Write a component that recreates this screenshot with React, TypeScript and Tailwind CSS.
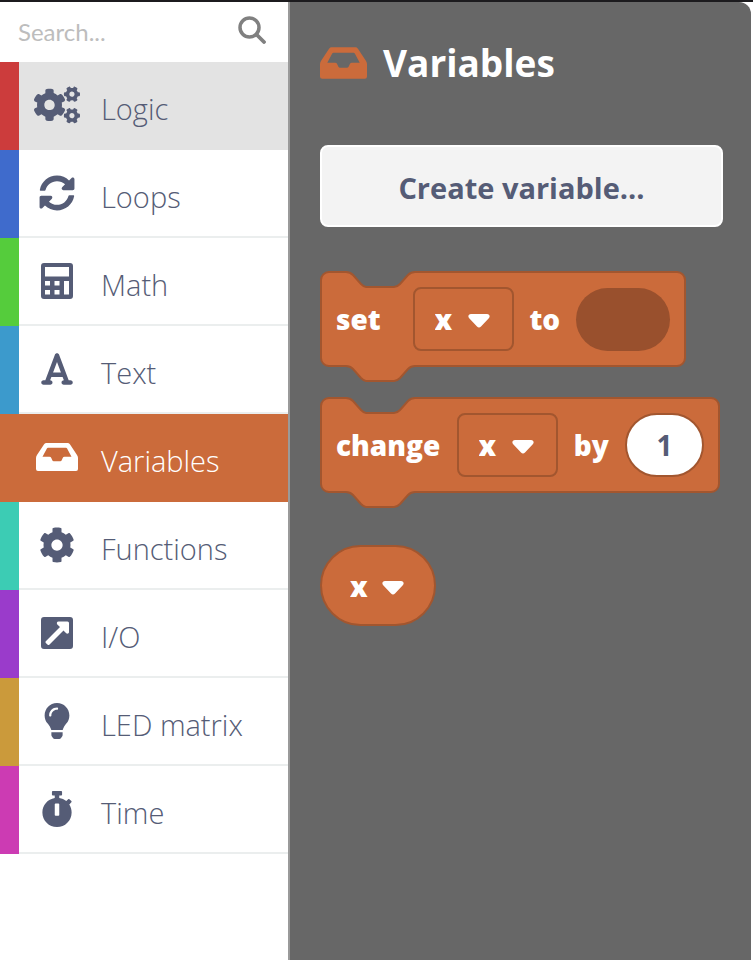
import React from "react";
import { FaCog, FaCogs, FaLightbulb, FaStopwatch, FaSyncAlt } from "react-icons/fa";
import { FaFont } from "react-icons/fa6";

function Calculator() {
  return (
    <svg viewBox="0 0 32 36" className="h-9 w-8" aria-hidden="true">
      <path
        fill="currentColor"
        fillRule="evenodd"
        d="M3 0H29a3 3 0 0 1 3 3V33a3 3 0 0 1-3 3H3a3 3 0 0 1-3-3V3a3 3 0 0 1 3-3ZM4 4V13.500H28V4ZM4 18V22.500H9V18ZM13.500 18V22.500H18.500V18ZM23 18V31.500H28V18ZM4 27V31.500H9V27ZM13.500 27V31.500H18.500V27Z"
      />
    </svg>
  );
}

function Inbox({ className }: { className: string }) {
  return (
    <svg viewBox="0 0 42 28" className={className} aria-hidden="true">
      <path
        fill="currentColor"
        fillRule="evenodd"
        d="M10.500 0H31.500Q33 0 33.900 1.300L41 12Q42 13.500 42 15V26Q42 28 40 28H2Q0 28 0 26V15Q0 13.500 1 12L8.100 1.300Q9 0 10.500 0ZM12 4.800Q11.300 4.800 10.900 5.400L6.500 13.800H13.500Q14.800 13.800 15.300 15L16.300 17.200Q16.700 18.200 17.700 18.200H24.300Q25.300 18.200 25.700 17.200L26.700 15Q27.200 13.800 28.500 13.800H35.500L31.100 5.400Q30.700 4.800 30 4.800Z"
      />
    </svg>
  );
}

function DiagonalArrow() {
  return (
    <svg viewBox="0 0 32 32" className="size-8" aria-hidden="true">
      <path
        fill="currentColor"
        fillRule="evenodd"
        d="M3 0H29a3 3 0 0 1 3 3V29a3 3 0 0 1-3 3H3a3 3 0 0 1-3-3V3a3 3 0 0 1 3-3ZM17.500 4.500C16 4.500 15.300 6.300 16.300 7.400L19 10.100L4.800 24.200Q4 25 4.800 25.900L6.700 27.700Q7.500 28.500 8.300 27.700L22.500 13.600L25.200 16.200C26.300 17.200 28 16.500 28 15V6Q28 4.500 26.500 4.500Z"
      />
    </svg>
  );
}

function Magnifier() {
  return (
    <svg viewBox="0 0 28 28" className="size-7" fill="none" stroke="currentColor" aria-hidden="true">
      <circle cx="11.500" cy="11.500" r="9.500" strokeWidth="3.5" />
      <path d="M18.500 18.500L26 26" strokeWidth="3.8" strokeLinecap="round" />
    </svg>
  );
}

const categories = [
  { name: "Logic", bar: "bg-[#cc3c3c]", icon: <FaCogs size={46} /> },
  { name: "Loops", bar: "bg-[#3f6bcc]", icon: <FaSyncAlt size={36} /> },
  { name: "Math", bar: "bg-[#55cc3c]", icon: <Calculator /> },
  { name: "Text", bar: "bg-[#3c9acc]", icon: <FaFont size={36} /> },
  { name: "Variables", bar: "bg-[#cb6b3b]", icon: <Inbox className="h-7 w-[42px]" /> },
  { name: "Functions", bar: "bg-[#3cccb4]", icon: <FaCog size={36} /> },
  { name: "I/O", bar: "bg-[#9a3bcb]", icon: <DiagonalArrow /> },
  { name: "LED matrix", bar: "bg-[#cb9a3b]", icon: <FaLightbulb size={36} /> },
  { name: "Time", bar: "bg-[#cc3bb3]", icon: <FaStopwatch size={36} /> },
];

function rowColors(name: string) {
  if (name === "Variables") return "bg-[#cb6b3b] text-white border-[#cb6b3b]";
  if (name === "Logic") return "bg-[#e3e3e3] text-[#555c76] border-[#e3e3e3]";
  return "bg-white text-[#555c76] border-[#ebeeee]";
}

function Caret() {
  return (
    <svg viewBox="0 0 22 14" className="h-[14px] w-[22px]" aria-hidden="true">
      <path
        fill="currentColor"
        d="M3 0H19C21.500 0 22.500 2.500 20.800 4.300L13 12.500C11.800 13.800 10.200 13.800 9 12.500L1.200 4.300C-0.500 2.500 0.500 0 3 0Z"
      />
    </svg>
  );
}

function VariableSelect({ label }: { label: string }) {
  return (
    <span className="relative flex h-16 w-[101px] shrink-0 items-center">
      <select
        aria-label={label}
        className="size-full appearance-none rounded-lg border-2 border-[#a2562f] bg-transparent pl-5 font-extrabold text-white"
      >
        <option>x</option>
      </select>
      <span className="pointer-events-none absolute right-6 pt-1">
        <Caret />
      </span>
    </span>
  );
}

function StatementBlock({ width, children }: { width: number; children: React.ReactNode }) {
  const right = width - 1;
  const outline = `M1 9a8 8 0 0 1 8-8H26c3 0 5 1 7 3l8 9c2 2 3 3 5 3H74c2 0 4-1 6-3l8-9c2-2 4-3 7-3H${right - 8}a8 8 0 0 1 8 8V87a8 8 0 0 1-8 8H95c-3 0-5 1-7 3l-8 9c-2 2-4 3-6 3H46c-2 0-3-1-5-3l-8-9c-2-2-4-3-7-3H9a8 8 0 0 1-8-8Z`;
  return (
    <div className="relative h-[111px]" style={{ width }}>
      <svg className="absolute inset-0 size-full" viewBox={`0 0 ${width} 111`} aria-hidden="true">
        <path d={outline} fill="#cb6b3b" stroke="#a2562f" strokeWidth="2" />
      </svg>
      <div className="relative flex h-24 items-center justify-between px-4">{children}</div>
    </div>
  );
}

export default function App() {
  return (
    <div className="flex min-h-screen border-t-2 border-[#1c1b1e] bg-white font-['Open_Sans','Noto_Sans',sans-serif]">
      <aside className="w-[290px] shrink-0 border-r-2 border-[#9a9a9a] bg-white">
        <div className="flex h-[60px] items-center justify-between pr-[22px] pl-[18px] text-[#808080]">
          <input
            type="search"
            aria-label="Search"
            placeholder="Search..."
            className="w-40 bg-transparent font-[Lato,sans-serif] text-2xl text-gray-700 outline-none placeholder:text-[#bdbdbd]"
          />
          <button type="button" aria-label="Search" className="pb-1">
            <Magnifier />
          </button>
        </div>
        <nav>
          {categories.map((c) => (
            <button key={c.name} type="button" className="flex h-[88px] w-full text-left">
              <span className={`h-full w-[19px] shrink-0 ${c.bar}`} />
              <span className={`flex h-full grow items-center border-b-2 ${rowColors(c.name)}`}>
                <span className="flex w-19 shrink-0 justify-center">{c.icon}</span>
                <span className="pt-2 pl-1.5 text-[29px] leading-10 font-light">{c.name}</span>
              </span>
            </button>
          ))}
        </nav>
      </aside>
      <main className="mr-0.5 grow rounded-tr-xl bg-[#676767] pt-9 pr-7 pl-[30px] text-[28px] font-extrabold text-white">
        <h1 className="flex items-center gap-4 text-[37px] leading-[50px] font-bold">
          <Inbox className="h-8 w-[47px] text-[#cb6b3b]" />
          Variables
        </h1>
        <button
          type="button"
          className="mt-[57px] h-[82px] w-full rounded-lg border-2 border-white bg-[#f3f3f3] pt-1 text-[29px] font-bold text-[#555c76]"
        >
          Create variable...
        </button>
        <div className="mt-11 flex flex-col items-start gap-[15px]">
          <StatementBlock width={366}>
            <span className="mr-4">set</span>
            <VariableSelect label="Variable to set" />
            <span>to</span>
            <span className="h-[63px] w-[94px] rounded-full bg-[#99502d]" />
          </StatementBlock>
          <StatementBlock width={400}>
            <label htmlFor="amount">change</label>
            <VariableSelect label="Variable to change" />
            <span>by</span>
            <input
              id="amount"
              defaultValue="1"
              className="h-16 w-[79px] rounded-full border-2 border-[#a2562f] bg-white text-center font-bold text-[#555c76]"
            />
          </StatementBlock>
        </div>
        <span className="relative mt-[37px] flex h-[81px] w-[116px] items-center">
          <select
            aria-label="Variable value"
            className="size-full appearance-none rounded-full border-2 border-[#a2562f] bg-[#cb6b3b] pl-7 font-extrabold text-white"
          >
            <option>x</option>
          </select>
          <span className="pointer-events-none absolute right-8 pt-1">
            <Caret />
          </span>
        </span>
      </main>
    </div>
  );
}
